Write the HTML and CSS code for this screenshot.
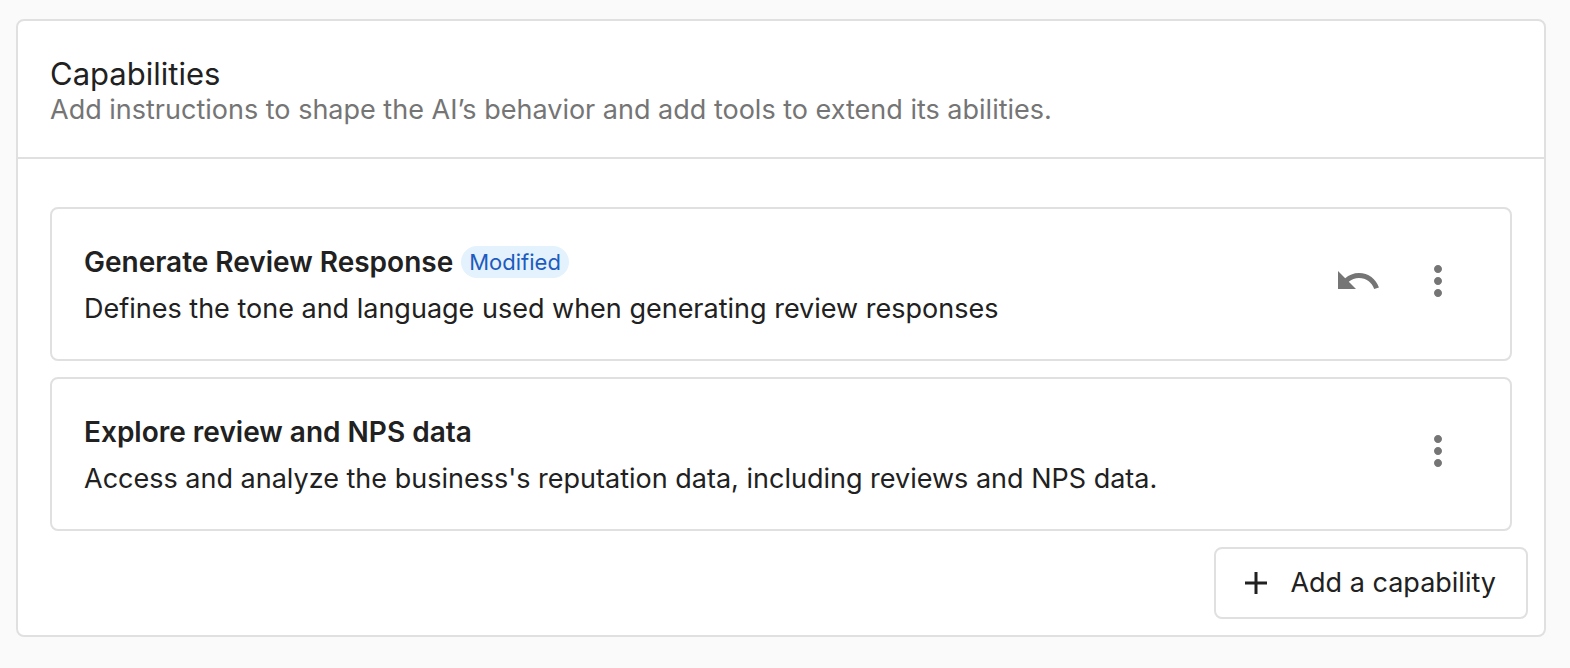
FILE: index.html
```html
<!DOCTYPE html>
<html lang="en">
<head>
    <meta charset="UTF-8">
    <meta name="viewport" content="width=device-width, initial-scale=1.0">
    <title>Capabilities</title>
    <link rel="stylesheet" href="styles.css">
</head>
<body>
    <main class="panel">
        <header class="panel-header">
            <h1>Capabilities</h1>
            <p>Add instructions to shape the AI’s behavior and add tools to extend its abilities.</p>
        </header>
        <ul class="capabilities">
            <li class="capability">
                <div class="info">
                    <h2>Generate Review Response <span class="badge">Modified</span></h2>
                    <p>Defines the tone and language used when generating review responses</p>
                </div>
                <button class="icon-button" type="button" aria-label="Undo changes">
                    <svg viewBox="0 0 24 24"><path d="M12.5 8c-2.65 0-5.05.99-6.9 2.6L2 7v9h9l-3.62-3.62c1.39-1.16 3.16-1.88 5.12-1.88 3.54 0 6.55 2.31 7.6 5.5l2.37-.78C21.08 11.03 17.15 8 12.5 8z"/></svg>
                </button>
                <button class="icon-button" type="button" aria-label="More options">
                    <svg viewBox="0 0 24 24"><path d="M12 8c1.1 0 2-.9 2-2s-.9-2-2-2-2 .9-2 2 .9 2 2 2zm0 2c-1.1 0-2 .9-2 2s.9 2 2 2 2-.9 2-2-.9-2-2-2zm0 6c-1.1 0-2 .9-2 2s.9 2 2 2 2-.9 2-2-.9-2-2-2z"/></svg>
                </button>
            </li>
            <li class="capability">
                <div class="info">
                    <h2>Explore review and NPS data</h2>
                    <p>Access and analyze the business's reputation data, including reviews and NPS data.</p>
                </div>
                <button class="icon-button" type="button" aria-label="More options">
                    <svg viewBox="0 0 24 24"><path d="M12 8c1.1 0 2-.9 2-2s-.9-2-2-2-2 .9-2 2 .9 2 2 2zm0 2c-1.1 0-2 .9-2 2s.9 2 2 2 2-.9 2-2-.9-2-2-2zm0 6c-1.1 0-2 .9-2 2s.9 2 2 2 2-.9 2-2-.9-2-2-2z"/></svg>
                </button>
            </li>
        </ul>
        <div class="actions">
            <button class="add-button" type="button">
                <svg viewBox="0 0 32 32"><path d="M5 16h22M16 5v22"/></svg>
                Add a capability
            </button>
        </div>
    </main>
</body>
</html>
```
FILE: styles.css
```css
* {
    box-sizing: border-box;
}

body {
    font-family: Inter, "Liberation Sans", sans-serif;
    font-size: 27px;
    line-height: 36px;
    background-color: #fafafa;
    margin: 0;
    padding: 19px 24px 30px 16px;
    color: #212121;
}

h1, h2, p {
    margin: 0;
}

.panel {
    background: #ffffff;
    border: 2px solid #e0e0e0;
    border-radius: 8px;
}

.panel-header {
    padding: 32px;
    border-bottom: 2px solid #e0e0e0;
}

.panel-header h1 {
    font-size: 31px;
    font-weight: 400;
    line-height: 42px;
}

.panel-header p {
    color: #757575;
    line-height: 30px;
}

.capabilities {
    list-style: none;
    margin: 0;
    padding: 48px 32px 16px;
    display: flex;
    flex-direction: column;
    gap: 16px;
}

.capability {
    display: flex;
    align-items: flex-start;
    padding: 32px;
    border: 2px solid #e0e0e0;
    border-radius: 8px;
}

.info {
    flex: 1;
}

.info h2 {
    display: flex;
    align-items: center;
    gap: 8px;
    font-size: 28px;
    font-weight: 600;
    line-height: 42px;
}

.info p {
    margin-top: 8px;
}

.badge {
    padding: 0 8px;
    border-radius: 16px;
    background: #e3f2fd;
    color: #1e5bbf;
    font-size: 22px;
    font-weight: 400;
    line-height: 32px;
}

.icon-button {
    width: 80px;
    height: 80px;
    padding: 16px;
    border: none;
    background: none;
    cursor: pointer;
}

.icon-button svg {
    display: block;
    width: 48px;
    height: 48px;
    fill: #757575;
}

.actions {
    display: flex;
    justify-content: flex-end;
    padding: 0 16px 16px;
}

.add-button {
    display: flex;
    align-items: center;
    gap: 18px;
    height: 72px;
    padding: 0 30px 0 24px;
    border: 2px solid #e0e0e0;
    border-radius: 8px;
    background: #ffffff;
    color: #212121;
    font: inherit;
    cursor: pointer;
}

.add-button svg {
    width: 32px;
    height: 32px;
    stroke: #212121;
    stroke-width: 3;
}
```
